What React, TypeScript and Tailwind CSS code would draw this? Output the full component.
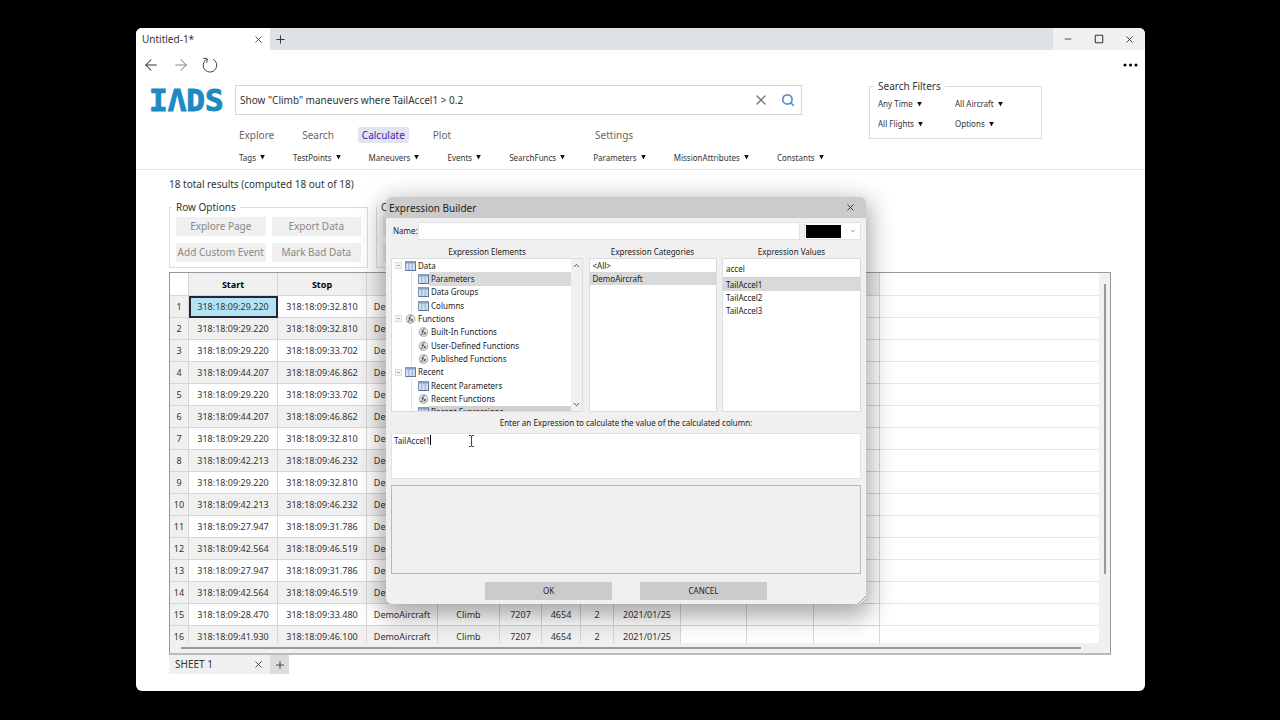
import { useState } from 'react';
import { ArrowLeft, ArrowRight, ChevronDown, ChevronUp, Minus, Plus, Search, Square, X } from 'lucide-react';

const mainTabs = ['Explore', 'Search', 'Calculate', 'Plot'];

const menus = ['Tags', 'TestPoints', 'Maneuvers', 'Events', 'SearchFuncs', 'Parameters', 'MissionAttributes', 'Constants'];

const filters = ['Any Time', 'All Aircraft', 'All Flights', 'Options'];

const columnCount = 11;

const rows = [
  ['318:18:09:29.220', '318:18:09:32.810', 'DemoAircraft'],
  ['318:18:09:29.220', '318:18:09:32.810', 'DemoAircraft'],
  ['318:18:09:29.220', '318:18:09:33.702', 'DemoAircraft'],
  ['318:18:09:44.207', '318:18:09:46.862', 'DemoAircraft'],
  ['318:18:09:29.220', '318:18:09:33.702', 'DemoAircraft'],
  ['318:18:09:44.207', '318:18:09:46.862', 'DemoAircraft'],
  ['318:18:09:29.220', '318:18:09:32.810', 'DemoAircraft'],
  ['318:18:09:42.213', '318:18:09:46.232', 'DemoAircraft'],
  ['318:18:09:29.220', '318:18:09:32.810', 'DemoAircraft'],
  ['318:18:09:42.213', '318:18:09:46.232', 'DemoAircraft'],
  ['318:18:09:27.947', '318:18:09:31.786', 'DemoAircraft'],
  ['318:18:09:42.564', '318:18:09:46.519', 'DemoAircraft'],
  ['318:18:09:27.947', '318:18:09:31.786', 'DemoAircraft'],
  ['318:18:09:42.564', '318:18:09:46.519', 'DemoAircraft'],
  ['318:18:09:28.470', '318:18:09:33.480', 'DemoAircraft', 'Climb', '7207', '4654', '2', '2021/01/25'],
  ['318:18:09:41.930', '318:18:09:46.100', 'DemoAircraft', 'Climb', '7207', '4654', '2', '2021/01/25'],
];

type TreeItem = { label: string; icon: 'table' | 'fx'; root?: boolean };

const tree: TreeItem[] = [
  { label: 'Data', icon: 'table', root: true },
  { label: 'Parameters', icon: 'table' },
  { label: 'Data Groups', icon: 'table' },
  { label: 'Columns', icon: 'table' },
  { label: 'Functions', icon: 'fx', root: true },
  { label: 'Built-In Functions', icon: 'fx' },
  { label: 'User-Defined Functions', icon: 'fx' },
  { label: 'Published Functions', icon: 'fx' },
  { label: 'Recent', icon: 'table', root: true },
  { label: 'Recent Parameters', icon: 'table' },
  { label: 'Recent Functions', icon: 'fx' },
  { label: 'Recent Expressions', icon: 'table' },
];

function Caret() {
  return (
    <svg viewBox="0 0 5 5" className="w-[5px] h-[5px] shrink-0" aria-hidden="true">
      <path d="M0.2 0h4.6L2.5 4.6z" fill="#111" />
    </svg>
  );
}

function TableIcon() {
  return (
    <svg viewBox="0 0 11 10" className="w-[11px] h-[10px] shrink-0" aria-hidden="true">
      <rect x="0.5" y="0.5" width="10" height="9" fill="#d3dfef" stroke="#8094b0" />
      <rect x="0.5" y="0.5" width="10" height="2" fill="#86a0c4" />
      <path d="M3.8 1v8M7.2 1v8" stroke="#86a0c4" strokeWidth="0.8" />
      <path d="M1 9.5h9.5v-8" stroke="#4f6c98" strokeWidth="0.8" fill="none" />
    </svg>
  );
}

function FxIcon() {
  return (
    <svg viewBox="0 0 11 10" className="w-[11px] h-[10px] shrink-0" aria-hidden="true">
      <circle cx="5.5" cy="5" r="4.4" fill="#e4e4e4" stroke="#999" strokeWidth="0.8" />
      <path d="M6.6 1.8C5 1.4 4.9 3 4.6 4.6S4 8.3 2.6 7.9M3.4 4.2h2.6M5.8 5l2 2.6M7.9 5L5.6 7.6" fill="none" stroke="#333" strokeWidth="0.8" />
    </svg>
  );
}

function RefreshIcon() {
  return (
    <svg viewBox="0 0 16 16" className="w-4 h-4" fill="none" stroke="#444" aria-hidden="true">
      <path d="M11 2.2a6.8 6.8 0 1 1-6.4 0.2" />
      <path d="M1.2 1.2l4.1 0.6l-0.5 4" />
    </svg>
  );
}

export default function App() {
  const [query, setQuery] = useState('Show "Climb" maneuvers where TailAccel1 > 0.2');
  const [activeTab, setActiveTab] = useState('Calculate');
  const [element, setElement] = useState('Parameters');
  const [category, setCategory] = useState('DemoAircraft');
  const [value, setValue] = useState('TailAccel1');
  const [name, setName] = useState('');
  const [valueFilter, setValueFilter] = useState('accel');
  const [expression, setExpression] = useState('TailAccel1');

  return (
    <div className="min-h-screen bg-black pl-[136px] pr-[135px] py-7 text-[#333] font-['Noto_Sans','Open_Sans',sans-serif]">
      <div className="relative bg-white rounded-md">
        {/* tab strip */}
        <div className="h-[22px] flex bg-[#dee1e5] rounded-t-md overflow-hidden">
          <div className="w-[134px] bg-white flex items-center justify-between px-1.5">
            <span className="text-[10px]">Untitled-1*</span>
            <button aria-label="Close tab"><X size={11} strokeWidth={1.8} /></button>
          </div>
          <button aria-label="New tab" className="px-1"><Plus size={13} strokeWidth={1.8} /></button>
          <div className="ml-auto w-[92px] bg-[#f0f0f0] flex items-center justify-between px-2.5">
            <button aria-label="Minimize"><Minus size={10} strokeWidth={2} /></button>
            <button aria-label="Maximize"><Square size={10} strokeWidth={2.5} /></button>
            <button aria-label="Close"><X size={11} strokeWidth={2} /></button>
          </div>
        </div>

        {/* navigation */}
        <div className="h-[30px] flex items-center gap-3 px-1.5">
          <button aria-label="Back"><ArrowLeft size={18} strokeWidth={1.4} /></button>
          <button aria-label="Forward" className="text-[#888]"><ArrowRight size={18} strokeWidth={1.4} /></button>
          <button aria-label="Reload"><RefreshIcon /></button>
          <button aria-label="More" className="ml-auto">
            <svg viewBox="0 0 16 4" className="w-4 h-1" aria-hidden="true">
              <circle cx="2" cy="2" r="1.5" /><circle cx="7.5" cy="2" r="1.5" /><circle cx="13" cy="2" r="1.5" />
            </svg>
          </button>
        </div>

        {/* search header */}
        <header className="h-[90px] flex items-start pt-[5px] pl-[13px] border-b border-[#e6e6e6]">
          <h1 aria-label="IADS" className="w-[86px] leading-[30px] text-[31px] font-bold text-[#1c8bc4] [-webkit-text-stroke:1px_#1c8bc4] font-['DejaVu_Sans_Mono',monospace]">IΛDS</h1>
          <div>
            <form className="w-[567px] h-[30px] flex items-center border border-[#d4d7da] pl-1 pr-1.5" onSubmit={(e) => e.preventDefault()}>
              <input
                aria-label="Search query"
                value={query}
                onChange={(e) => setQuery(e.target.value)}
                className="flex-1 text-[10px] outline-none"
              />
              <button type="button" aria-label="Clear" onClick={() => setQuery('')} className="text-[#777]"><X size={16} strokeWidth={2} /></button>
              <button aria-label="Run search" className="ml-3 text-[#5b90c8]"><Search size={14} strokeWidth={3} /></button>
            </form>
            <nav className="flex items-center mt-3 text-[10px] leading-4 text-[#666]">
              {mainTabs.map((tab) => (
                <button
                  key={tab}
                  onClick={() => setActiveTab(tab)}
                  className={tab === activeTab ? 'px-1 mr-5 rounded-xs bg-[#e4e4ee] text-[#3a22c0]' : 'px-1 mr-5'}
                >
                  {tab}
                </button>
              ))}
              <button className="ml-[116px] px-1">Settings</button>
            </nav>
            <div className="flex items-center gap-7 mt-2 pl-1 text-[8px] leading-[13px]">
              {menus.map((menu) => (
                <button key={menu} aria-haspopup="menu" className="flex items-center gap-1 whitespace-nowrap">
                  {menu}<Caret />
                </button>
              ))}
            </div>
          </div>
          <fieldset className="ml-auto -mt-[7px] mr-[103px] w-[173px] h-[61px] border border-[#dcdcdc] px-2">
            <legend className="px-1 -ml-1 -my-2 text-[10px] leading-4">Search Filters</legend>
            <div className="grid grid-cols-[77px_1fr] gap-y-2 pt-3 text-[8px] leading-3">
              {filters.map((filter) => (
                <label key={filter} className="flex items-center gap-1">
                  <select aria-label={filter} className="appearance-none field-sizing-content outline-none">
                    <option>{filter}</option>
                  </select>
                  <Caret />
                </label>
              ))}
            </div>
          </fieldset>
        </header>

        <main className="pl-[33px] pr-[34px] pb-[17px]">
          <p className="pt-1.5 text-[10px] leading-4">18 total results (computed 18 out of 18)</p>

          <div className="flex gap-2 mt-[7px]">
            <fieldset className="w-[199px] h-[69px] border border-[#dcdcdc] px-1.5">
              <legend className="px-1 -ml-1 text-[10px] leading-4">Row Options</legend>
              <div className="grid grid-cols-2 gap-x-1.5 gap-y-[7px] pt-0.5 text-[10px] leading-[19px] text-[#888]">
                <button className="bg-[#f0f0f0] whitespace-nowrap">Explore Page</button>
                <button className="bg-[#f0f0f0] whitespace-nowrap">Export Data</button>
                <button className="bg-[#f0f0f0] whitespace-nowrap">Add Custom Event</button>
                <button className="bg-[#f0f0f0] whitespace-nowrap">Mark Bad Data</button>
              </div>
            </fieldset>
            <fieldset className="w-[199px] h-[69px] border border-[#dcdcdc] px-1.5">
              <legend className="px-1 -ml-1.5 text-[10px] leading-4">C</legend>
              <div className="grid gap-y-[7px] pt-0.5">
                <div className="h-[19px] bg-[#f0f0f0]" />
                <div className="h-[19px] bg-[#f0f0f0]" />
              </div>
            </fieldset>
          </div>

          {/* results sheet */}
          <div className="mt-1 border border-[#999] border-b-2 border-b-[#bbb] bg-[#f0f0f0]">
            <div className="flex">
              <div className="flex-1 h-[370px] overflow-hidden bg-white">
                <table className="w-full table-fixed border-separate border-spacing-0 text-[9px] leading-[21px] text-center">
                  <colgroup>
                    <col className="w-[19px]" />
                    <col className="w-[89px]" />
                    <col className="w-[89px]" />
                    <col className="w-[71px]" />
                    <col className="w-[62px]" />
                    <col className="w-[42px]" />
                    <col className="w-[39px]" />
                    <col className="w-[33px]" />
                    <col className="w-[67px]" />
                    <col className="w-[66px]" />
                    <col className="w-[67px]" />
                    <col className="w-[66px]" />
                    <col />
                  </colgroup>
                  <thead>
                    <tr className="text-black">
                      <th className="h-[23px] border-r border-b border-[#d6d6d6]" />
                      <th className="bg-[#f0f0f0] border-r border-b border-[#d6d6d6]">Start</th>
                      <th className="bg-[#f0f0f0] border-r border-b border-[#d6d6d6]">Stop</th>
                      {Array.from({ length: 9 }, (_, i) => (
                        <th key={i} className="bg-[#f0f0f0] border-r border-b border-[#d6d6d6]" />
                      ))}
                      <th className="border-b border-[#e6e6e6]" />
                    </tr>
                  </thead>
                  <tbody>
                    {rows.map((row, i) => (
                      <tr key={i}>
                        <th className="h-[22px] bg-[#f0f0f0] border-r border-b border-[#d6d6d6] font-normal">{i + 1}</th>
                        {Array.from({ length: columnCount }, (_, j) => (
                          <td
                            key={j}
                            className={
                              i === 0 && j === 0
                                ? 'bg-[#b5e3f3] border-r border-b border-[#1c2b33] outline-2 -outline-offset-2 outline-[#1c2b33]'
                                : i % 2 && j < 8
                                  ? 'bg-[#f0f0f0] border-r border-b border-[#d6d6d6]'
                                  : 'border-r border-b border-[#d6d6d6]'
                            }
                          >
                            {row[j]}
                          </td>
                        ))}
                        <td className="border-b border-[#e6e6e6]" />
                      </tr>
                    ))}
                  </tbody>
                </table>
              </div>
              <div className="w-[11px] pt-[11px] pl-[5px]">
                <div className="w-0.5 h-[290px] bg-[#999]" />
              </div>
            </div>
            <div className="h-2.5 pt-1 pl-[11px] pr-[29px]">
              <div className="h-0.5 bg-[#999]" />
            </div>
          </div>

          <div className="flex h-[19px]">
            <div className="w-[101px] bg-[#f0f0f0] flex items-center justify-between px-1.5">
              <span className="text-[10px]">SHEET 1</span>
              <button aria-label="Close sheet"><X size={11} strokeWidth={1.8} /></button>
            </div>
            <button aria-label="Add sheet" className="w-[19px] bg-[#dcdcdc] flex items-center justify-center"><Plus size={12} strokeWidth={1.8} /></button>
          </div>
        </main>

        {/* expression builder window */}
        <div role="dialog" aria-label="Expression Builder" className="absolute left-[250px] top-[169px] w-[480px] bg-[#f0f0f0] rounded-md shadow-[0_8px_24px_4px_rgba(0,0,0,0.35)] text-[8px] leading-3 text-[#222]">
          <div className="h-[21px] flex items-center justify-between pl-[3px] pr-2.5 bg-[#cbcbcb] rounded-t-md">
            <h2 className="text-[10px] leading-4">Expression Builder</h2>
            <button aria-label="Close dialog"><X size={11} strokeWidth={1.8} /></button>
          </div>

          <div className="px-[5px] pt-1 pb-1">
            <div className="flex items-center h-[18px]">
              <label htmlFor="expr-name" className="w-[27px] pl-0.5">Name:</label>
              <input
                id="expr-name"
                value={name}
                onChange={(e) => setName(e.target.value)}
                className="flex-1 h-[18px] bg-white border border-[#e2e2e2] outline-none px-1"
              />
              <label className="ml-1 w-[57px] h-[18px] bg-white border border-[#e2e2e2] flex items-center justify-between pl-px pr-1">
                <select aria-label="Color" className="appearance-none w-[35px] h-[13px] bg-black">
                  <option value="#000000" aria-label="Black" />
                </select>
                <ChevronDown size={6} />
              </label>
            </div>

            <div className="grid grid-cols-[192px_128px_139px] justify-between mt-[5px]">
              <h3 className="text-center leading-[13px]">Expression Elements</h3>
              <h3 className="text-center leading-[13px]">Expression Categories</h3>
              <h3 className="text-center leading-[13px]">Expression Values</h3>

              <div className="h-[154px] flex bg-white border border-[#dcdcdc] overflow-hidden">
                <ul className="flex-1 h-40 grid auto-rows-fr">
                  {tree.map((item) => (
                    <li key={item.label} className="flex min-h-0">
                      {item.root ? (
                        <span className="w-[13px] flex items-center pl-[3px]">
                          <svg viewBox="0 0 7 7" className="w-[7px] h-[7px]" aria-hidden="true">
                            <rect x="0.5" y="0.5" width="6" height="6" fill="#f4f4f4" stroke="#ddd" />
                            <path d="M2 3.5h3" stroke="#aaa" />
                          </svg>
                        </span>
                      ) : (
                        <span className="w-[7px] ml-[19px] border-l border-[#e4e4e4]" />
                      )}
                      <button onClick={() => setElement(item.label)} className="flex-1 flex items-stretch text-left whitespace-nowrap">
                        <span className="flex items-center">{item.icon === 'table' ? <TableIcon /> : <FxIcon />}</span>
                        <span className={
                          item.label === element
                            ? 'flex-1 flex items-center pl-0.5 bg-[#d9d9d9]'
                            : item.label === 'Recent Expressions'
                              ? 'flex-1 flex items-center pl-0.5 bg-[#d0d0d0]'
                              : 'flex-1 flex items-center pl-0.5'
                        }>
                          {item.label}
                        </span>
                      </button>
                    </li>
                  ))}
                </ul>
                <div className="w-[11px] bg-[#f0f0f0] flex flex-col items-center justify-between py-0.5">
                  <ChevronUp size={9} strokeWidth={2} />
                  <ChevronDown size={9} strokeWidth={2} />
                </div>
              </div>

              <ul className="bg-white border border-[#dcdcdc] leading-[13px]">
                {['<All>', 'DemoAircraft'].map((item) => (
                  <li key={item}>
                    <button
                      onClick={() => setCategory(item)}
                      className={item === category ? 'block w-full pl-[3px] text-left bg-[#d9d9d9]' : 'block w-full pl-[3px] text-left'}
                    >
                      {item}
                    </button>
                  </li>
                ))}
              </ul>

              <div className="bg-white border border-[#dcdcdc] leading-[13px]">
                <input
                  aria-label="Filter values"
                  value={valueFilter}
                  onChange={(e) => setValueFilter(e.target.value)}
                  className="block w-full h-[19px] px-[3px] border-b border-[#ccc] outline-none"
                />
                <ul>
                  {['TailAccel1', 'TailAccel2', 'TailAccel3'].map((item) => (
                    <li key={item}>
                      <button
                        onClick={() => setValue(item)}
                        className={item === value ? 'block w-full pl-[3px] text-left bg-[#d9d9d9]' : 'block w-full pl-[3px] text-left'}
                      >
                        {item}
                      </button>
                    </li>
                  ))}
                </ul>
              </div>
            </div>

            <label htmlFor="expr-text" className="block my-1 text-center leading-[13px]">Enter an Expression to calculate the value of the calculated column:</label>
            <div className="relative">
              <textarea
                id="expr-text"
                value={expression}
                onChange={(e) => setExpression(e.target.value)}
                className="block w-full h-[46px] px-0.5 py-px bg-white border border-[#e2e2e2] outline-none resize-none"
              />
              {/* text caret and mouse pointer */}
              <span className="absolute left-[39px] top-0.5 w-px h-2.5 bg-black" />
              <svg viewBox="0 0 7 12" className="absolute left-[77px] top-0.5 w-[7px] h-3" aria-hidden="true">
                <path d="M1 0.5h2l0.5 0.5l0.5-0.5h2M3.5 1v10M1 11.5h2l0.5-0.5l0.5 0.5h2" fill="none" stroke="#444" />
              </svg>
            </div>
            <output className="block mt-1.5 h-[89px] border border-[#b8b8b8]" />
            <div className="flex justify-center gap-7 mt-2 leading-[18px]">
              <button className="w-[127px] bg-[#cbcbcb]">OK</button>
              <button className="w-[127px] bg-[#cbcbcb]">CANCEL</button>
            </div>
          </div>
          <svg viewBox="0 0 8 8" className="absolute right-0 bottom-0 w-2 h-2" aria-hidden="true">
            <path d="M8 0L0 8M8 3L3 8" stroke="#999" fill="none" />
          </svg>
        </div>
      </div>
    </div>
  );
}
